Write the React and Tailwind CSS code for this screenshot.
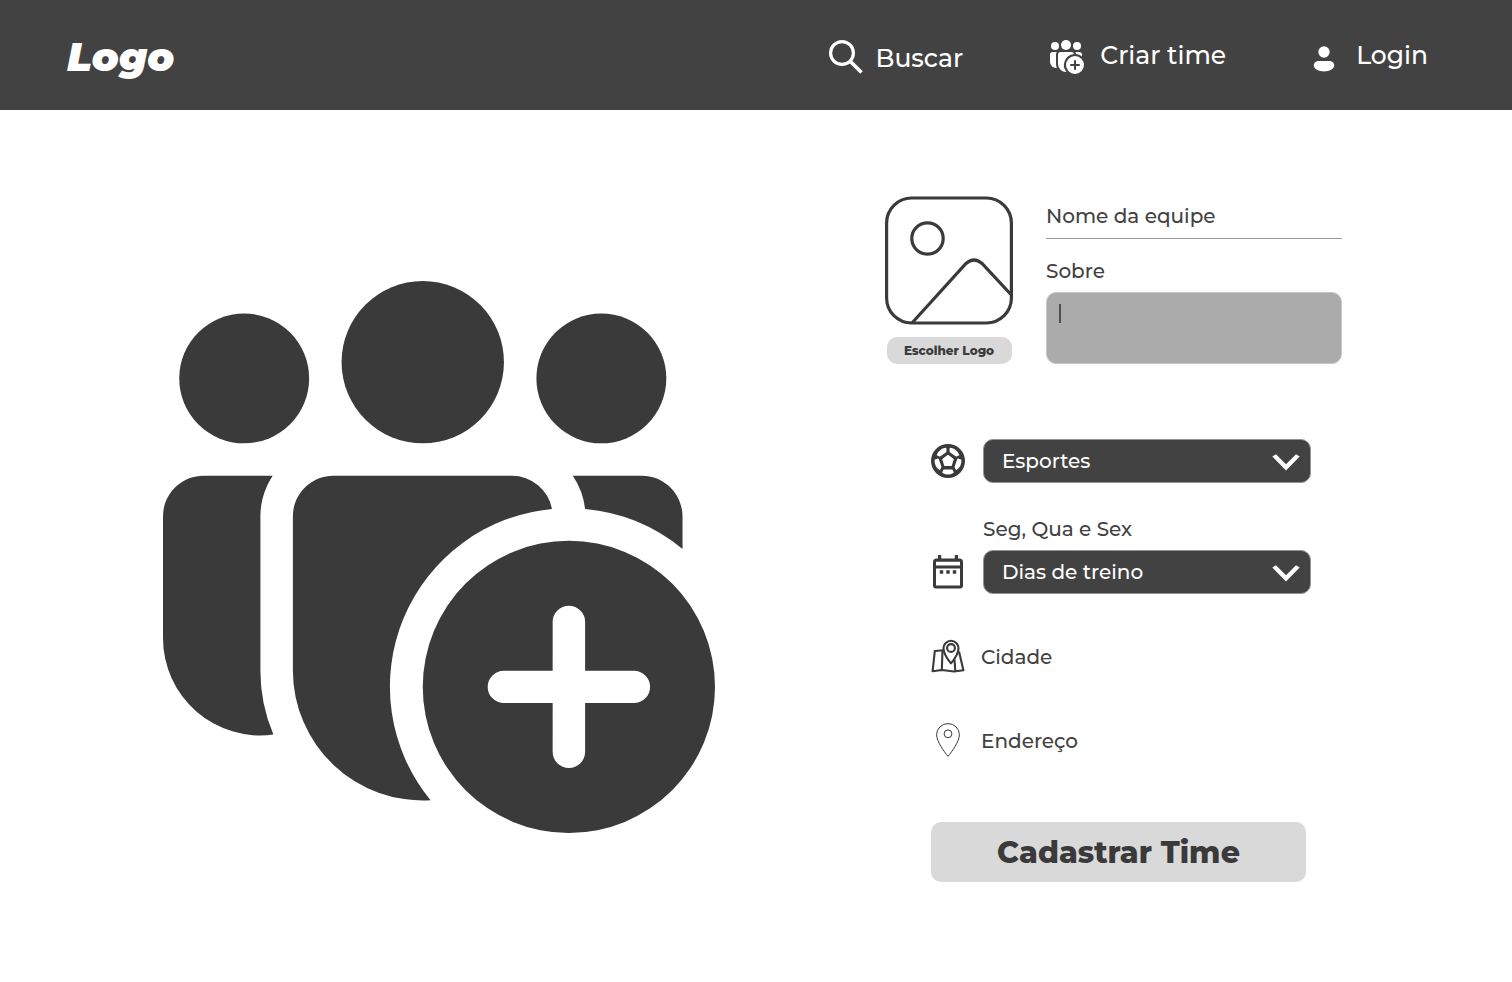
function TeamAddIcon({ className }) {
  return (
    <svg viewBox="2 2 17 17" className={className} fill="currentColor" aria-hidden="true">
      <circle cx="4.5" cy="5" r="2" />
      <circle cx="10" cy="4.5" r="2.5" />
      <circle cx="15.5" cy="5" r="2" />
      <path d="M5.38 8H3.25C2.56 8 2 8.56 2 9.25V13a3 3 0 0 0 3.4 2.97A5 5 0 0 1 5 14V9.25c0-.46.14-.89.38-1.25Z" />
      <path d="M13.98 9.02A1.25 1.25 0 0 0 12.75 8h-5.5C6.56 8 6 8.56 6 9.25V14a4 4 0 0 0 4.24 3.99A5.5 5.5 0 0 1 13.98 9.02Z" />
      <path d="M15 9.02A2.3 2.3 0 0 0 14.62 8h2.13c.69 0 1.25.56 1.25 1.25v1A5.5 5.5 0 0 0 15 9.02Z" />
      <path
        fillRule="evenodd"
        d="M19 14.5a4.5 4.5 0 1 1-9 0 4.5 4.5 0 0 1 9 0ZM15 12.5a.5.5 0 0 0-1 0V14h-1.5a.5.5 0 0 0 0 1H14v1.5a.5.5 0 0 0 1 0V15h1.5a.5.5 0 0 0 0-1H15Z"
      />
    </svg>
  );
}

function SearchIcon() {
  return (
    <svg viewBox="0 0 34 34" className="size-[34px]" fill="none" stroke="currentColor" aria-hidden="true">
      <circle cx="13" cy="13" r="11.4" strokeWidth="3.2" />
      <path d="M21 21 32.5 32.5" strokeWidth="3.6" />
    </svg>
  );
}

function UserIcon() {
  return (
    <svg viewBox="0 0 22 26" className="mt-2 h-[26px] w-[22px]" fill="currentColor" aria-hidden="true">
      <circle cx="11" cy="6" r="5.7" />
      <path d="M5.6 15h10.8c2.600 0 4.800 1.800 4.800 4.300 0 4-5.200 6.200-10.200 6.200S.8 23.300.8 19.300C.8 16.800 3 15 5.600 15Z" />
    </svg>
  );
}

function PictureIcon() {
  return (
    <svg viewBox="0 0 128 129" className="w-full" fill="none" stroke="currentColor" strokeWidth="3.2" aria-hidden="true">
      <rect x="1.6" y="2" width="124.8" height="125" rx="25" />
      <circle cx="42.5" cy="42.5" r="15.7" />
      <path d="M27 127 81 67.5Q89 60.5 97 67.5L126.4 99" />
    </svg>
  );
}

function BallIcon() {
  return (
    <svg viewBox="0 0 34 34" className="size-[34px]" aria-hidden="true">
      <circle cx="17" cy="17" r="17" fill="currentColor" />
      <g fill="white" stroke="white" strokeWidth="1.5" strokeLinejoin="round">
        <path d="M17 11.7 22 15.3 20.1 21.2H13.9L12 15.3Z" />
        <path d="M14.7 4.6V7.6L8.6 11.8 6.5 10.9C8 7.6 11 5.3 14.7 4.6Z" />
        <path d="M19.3 4.6V7.6L25.4 11.8 27.5 10.9C26 7.6 23 5.3 19.3 4.6Z" />
        <path d="M4.3 16.2 7 15.3 9.7 23 8.6 25.1C5.9 23.3 4.3 20 4.3 16.2Z" />
        <path d="M29.7 16.2 27 15.3 24.3 23 25.4 25.1C28.1 23.3 29.7 20 29.7 16.2Z" />
        <path d="M13 26.3H21L22 28.3C19 30 15 30 12 28.3Z" />
      </g>
    </svg>
  );
}

function CalendarIcon() {
  return (
    <svg viewBox="0 0 34 34" className="size-[34px]" fill="currentColor" aria-hidden="true">
      <path
        fillRule="evenodd"
        d="M7 0h3.2v3.5h13.6V0H27v3.5h1.5A3.5 3.5 0 0 1 32 7v23.5a3 3 0 0 1-3 3H5a3 3 0 0 1-3-3V7a3.5 3.5 0 0 1 3.5-3.5H7ZM5 6.8V10.5H29V6.8ZM5 13.5V30.5H29V13.5Z"
      />
      <path d="M8.8 15.3h3.4v3.4H8.8ZM15.3 15.3h3.4v3.4h-3.4ZM21.8 15.3h3.4v3.4h-3.4Z" />
    </svg>
  );
}

function MapPinIcon() {
  return (
    <svg viewBox="0 0 34 34" className="size-[34px]" fill="none" stroke="currentColor" strokeWidth="2.1" strokeLinejoin="round" aria-hidden="true">
      <path d="M12.5 11.3 3.8 12 1.6 32.3 11 31 23 32.5 32.4 31.3 28 12.5" />
      <path d="M11.5 11.5 10.8 31M23.5 20.5 24.3 32.3" />
      <path d="M20 24.3C16 19.5 12.5 14 12.5 9.2a7.5 7.5 0 0 1 15 0C27.5 14 24 19.5 20 24.3Z" />
      <circle cx="20" cy="9" r="3.9" />
    </svg>
  );
}

function PinIcon() {
  return (
    <svg viewBox="0 0 34 34" className="size-[34px]" fill="none" stroke="currentColor" strokeWidth="1" aria-hidden="true">
      <path d="M17 33.3C13 28.5 5.6 18.5 5.6 11.7a11.4 11.1 0 0 1 22.8 0C28.4 18.5 21 28.5 17 33.3Z" />
      <circle cx="17" cy="10.8" r="3.9" />
    </svg>
  );
}

function Dropdown({ label }) {
  return (
    <div className="relative">
      <select
        aria-label={label}
        className="block h-11 w-full appearance-none rounded-[10px] border border-[#929292] bg-[#424242] pr-12 pl-[18px] text-[20px] font-medium text-white"
      >
        <option>{label}</option>
      </select>
      <svg
        viewBox="0 0 28 17"
        className="pointer-events-none absolute top-[15px] right-[11px] h-[17px] w-7 text-white"
        fill="currentColor"
        aria-hidden="true"
      >
        <path d="M.3 2.6 4 .3 14 10.3 24 .3 27.7 2.6 14 16.5Z" />
      </svg>
    </div>
  );
}

function PlaceField({ icon, label }) {
  return (
    <label className="flex items-center gap-4">
      {icon}
      <input
        type="text"
        aria-label={label}
        placeholder={label}
        className="h-[34px] min-w-0 flex-1 bg-transparent pt-0.5 text-[20px] font-medium outline-none placeholder:text-[#424242] placeholder:opacity-100"
      />
    </label>
  );
}

export default function App() {
  return (
    <div className="min-h-screen bg-white font-['Montserrat','Inter',sans-serif] text-[#3a3a3a]">
      <header className="flex h-[110px] items-center justify-between bg-[#424242] pr-[84px] pl-[67px] text-white">
        <a href="#inicio" className="pt-1 text-[40px] font-black italic">
          Logo
        </a>
        <nav className="flex items-center gap-[87px] text-[25px] font-medium">
          <a href="#buscar" className="flex items-center gap-3 pt-1">
            <SearchIcon />
            <span className="pt-1">Buscar</span>
          </a>
          <a href="#criar-time" className="flex items-center gap-4">
            <TeamAddIcon className="mt-1 size-[34px]" />
            <span className="pt-0.5">Criar time</span>
          </a>
          <a href="#login" className="flex items-center gap-[21px]">
            <UserIcon />
            <span className="pt-0.5">Login</span>
          </a>
        </nav>
      </header>

      <main className="grid grid-cols-[552fr_457fr] items-start gap-[170px] pt-[86px] pr-[170px] pb-[100px] pl-[163px]">
        <TeamAddIcon className="mt-[85px] w-full" />

        <form>
          <div className="flex gap-[33px]">
            <div className="flex w-32 shrink-0 flex-col items-center gap-3">
              <PictureIcon />
              <button type="button" className="h-[27px] w-[125px] rounded-[10px] bg-[#d9d9d9] text-[12px] font-extrabold">
                Escolher Logo
              </button>
            </div>
            <div className="min-w-0 flex-1 pt-1">
              <input
                type="text"
                aria-label="Nome da equipe"
                placeholder="Nome da equipe"
                className="block h-[39px] w-full border-b border-[#9a9a9a] pb-[7px] text-[20px] font-medium outline-none placeholder:text-[#424242] placeholder:opacity-100"
              />
              <label htmlFor="sobre" className="mt-[17px] mb-[6px] block text-[20px] leading-[30px] font-medium text-[#424242]">
                Sobre
              </label>
              <div className="relative">
                <textarea
                  id="sobre"
                  className="block h-[72px] w-full resize-none rounded-[10px] border border-[#c8c8c8] bg-[#ababab] px-3 py-2 text-[20px] font-medium outline-none"
                />
                <span className="pointer-events-none absolute top-3 left-[13px] h-[19px] w-[2px] bg-[#4d4d4d]" />
              </div>
            </div>
          </div>

          <div className="mt-[75px] mr-[31px] ml-[46px]">
            <div className="grid grid-cols-[34px_1fr] items-center gap-x-[18px]">
              <BallIcon />
              <Dropdown label="Esportes" />
              <p className="col-start-2 mt-[31px] mb-[6px] text-[20px] leading-[30px] font-medium text-[#424242]">Seg, Qua e Sex</p>
              <CalendarIcon />
              <Dropdown label="Dias de treino" />
            </div>
            <div className="mt-[45px] flex flex-col gap-[50px]">
              <PlaceField icon={<MapPinIcon />} label="Cidade" />
              <PlaceField icon={<PinIcon />} label="Endereço" />
            </div>
            <button type="submit" className="mt-[65px] h-[60px] w-[375px] rounded-[10px] bg-[#d9d9d9] text-[30px] font-extrabold">
              Cadastrar Time
            </button>
          </div>
        </form>
      </main>
    </div>
  );
}
